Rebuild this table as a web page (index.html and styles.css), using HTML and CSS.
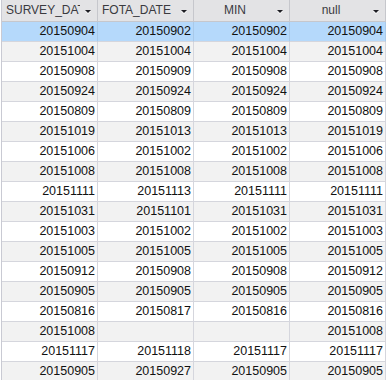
FILE: index.html
```html
<!DOCTYPE html>
<html>
<head>
<meta charset="utf-8">
<link rel="stylesheet" href="styles.css">
</head>
<body>
<div class="sheet">
  <div class="row head">
    <div class="hcell left"><span class="label">SURVEY_DATE</span><span class="arrow"></span></div>
    <div class="hcell left"><span class="label">FOTA_DATE</span><span class="arrow"></span></div>
    <div class="hcell center"><span class="label">MIN</span><span class="arrow"></span></div>
    <div class="hcell center"><span class="label">null</span><span class="arrow"></span></div>
  </div>
  <div class="row sel"><div class="cell">20150904</div><div class="cell">20150902</div><div class="cell">20150902</div><div class="cell">20150904</div></div>
  <div class="row alt"><div class="cell">20151004</div><div class="cell">20151004</div><div class="cell">20151004</div><div class="cell">20151004</div></div>
  <div class="row"><div class="cell">20150908</div><div class="cell">20150909</div><div class="cell">20150908</div><div class="cell">20150908</div></div>
  <div class="row alt"><div class="cell">20150924</div><div class="cell">20150924</div><div class="cell">20150924</div><div class="cell">20150924</div></div>
  <div class="row"><div class="cell">20150809</div><div class="cell">20150809</div><div class="cell">20150809</div><div class="cell">20150809</div></div>
  <div class="row alt"><div class="cell">20151019</div><div class="cell">20151013</div><div class="cell">20151013</div><div class="cell">20151019</div></div>
  <div class="row"><div class="cell">20151006</div><div class="cell">20151002</div><div class="cell">20151002</div><div class="cell">20151006</div></div>
  <div class="row alt"><div class="cell">20151008</div><div class="cell">20151008</div><div class="cell">20151008</div><div class="cell">20151008</div></div>
  <div class="row"><div class="cell">20151111</div><div class="cell">20151113</div><div class="cell">20151111</div><div class="cell">20151111</div></div>
  <div class="row alt"><div class="cell">20151031</div><div class="cell">20151101</div><div class="cell">20151031</div><div class="cell">20151031</div></div>
  <div class="row"><div class="cell">20151003</div><div class="cell">20151002</div><div class="cell">20151002</div><div class="cell">20151003</div></div>
  <div class="row alt"><div class="cell">20151005</div><div class="cell">20151005</div><div class="cell">20151005</div><div class="cell">20151005</div></div>
  <div class="row"><div class="cell">20150912</div><div class="cell">20150908</div><div class="cell">20150908</div><div class="cell">20150912</div></div>
  <div class="row alt"><div class="cell">20150905</div><div class="cell">20150905</div><div class="cell">20150905</div><div class="cell">20150905</div></div>
  <div class="row"><div class="cell">20150816</div><div class="cell">20150817</div><div class="cell">20150816</div><div class="cell">20150816</div></div>
  <div class="row alt"><div class="cell">20151008</div><div class="cell"></div><div class="cell"></div><div class="cell">20151008</div></div>
  <div class="row"><div class="cell">20151117</div><div class="cell">20151118</div><div class="cell">20151117</div><div class="cell">20151117</div></div>
  <div class="row alt"><div class="cell">20150905</div><div class="cell">20150927</div><div class="cell">20150905</div><div class="cell">20150905</div></div>
</div>
</body>
</html>
```
FILE: styles.css
```css
html, body {
  margin: 0;
  padding: 0;
  background: #ffffff;
  overflow: hidden;
}
.sheet {
  margin-left: 1px;
  border-left: 1px solid #c9cad3;
  width: 400px;
  font-family: "Liberation Sans", Arial, sans-serif;
}
.row {
  display: grid;
  grid-template-columns: repeat(4, 96px);
  height: 20px;
  background: #ffffff;
}
.row.alt {
  background: #f2f2f2;
}
.row.sel {
  background: #b5d9fb;
}
.cell {
  box-sizing: border-box;
  border-right: 1px solid #d5d6dd;
  border-bottom: 1px solid #d5d6dd;
  text-align: right;
  padding-right: 2px;
  font-size: 12.5px;
  line-height: 19px;
  color: #111111;
  white-space: nowrap;
  overflow: hidden;
}
.row.sel .cell {
  border-right-color: #a9c9e8;
  border-bottom-color: #d5d6dd;
}
.row.head {
  height: 22px;
  background: #e3e3e5;
}
.hcell {
  box-sizing: border-box;
  display: flex;
  align-items: center;
  border-right: 1px solid #c6c7cc;
  border-bottom: 1px solid #c6c7cc;
  font-size: 12px;
  color: #3a3a3f;
  padding-left: 4px;
  overflow: hidden;
}
.hcell .label {
  flex: 1;
  overflow: hidden;
  white-space: clip;
  line-height: 21px;
}
.hcell.left .label {
  text-align: left;
}
.hcell.center .label {
  text-align: center;
}
.arrow {
  flex: none;
  width: 0;
  height: 0;
  margin-left: 5px;
  margin-right: 6px;
  margin-top: 1px;
  border-left: 3px solid transparent;
  border-right: 3px solid transparent;
  border-top: 3px solid #1e1e24;
  filter: drop-shadow(0 1px 0 #ffffff);
}
```
